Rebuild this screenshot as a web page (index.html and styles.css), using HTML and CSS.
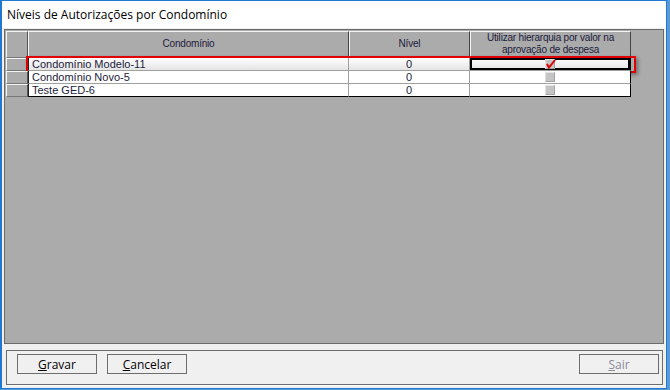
FILE: index.html
```html
<!DOCTYPE html>
<html lang="pt">
<head>
    <meta charset="UTF-8">
    <title>Níveis de Autorizações por Condomínio</title>
    <link rel="stylesheet" href="styles.css">
</head>
<body>
<div class="window">
    <div class="title">Níveis de Autorizações por Condomínio</div>
    <div class="content">
        <div class="grid">
            <div class="row head">
                <div class="sel"></div>
                <div class="hcell">Condomínio</div>
                <div class="hcell">Nível</div>
                <div class="hcell">Utilizar hierarquia por valor na<br>aprovação de despesa</div>
            </div>
            <div class="row data current">
                <div class="sel"></div>
                <div class="cell">Condomínio Modelo-11</div>
                <div class="cell num">0</div>
                <div class="cell chk focus">
                    <span class="box">
                        <svg width="11" height="10" viewBox="0 0 11 10"><path d="M2 5 L4 8.5 L10 1" fill="none" stroke="#e00000" stroke-width="2"/></svg>
                    </span>
                </div>
                <div class="mark"></div>
            </div>
            <div class="row data">
                <div class="sel"></div>
                <div class="cell">Condomínio Novo-5</div>
                <div class="cell num">0</div>
                <div class="cell chk"><span class="box"></span></div>
            </div>
            <div class="row data last">
                <div class="sel"></div>
                <div class="cell">Teste GED-6</div>
                <div class="cell num">0</div>
                <div class="cell chk"><span class="box"></span></div>
            </div>
        </div>
        <div class="buttons">
            <button class="btn"><u>G</u>ravar</button>
            <button class="btn"><u>C</u>ancelar</button>
            <button class="btn off push"><u>S</u>air</button>
        </div>
    </div>
</div>
</body>
</html>
```

FILE: styles.css
```css
body { margin: 0; background: #5b9bd5; font-family: "Liberation Sans", Arial, sans-serif; }
.window { box-sizing: border-box; width: 667px; height: 389px; border: 1px solid #1f78d1; border-left-width: 2px; background: #f0f0f0; display: flex; flex-direction: column; }
.title { height: 27px; line-height: 27px; background: #fff; padding-left: 5px; font-size: 12px; color: #000; font-family: "Open Sans", sans-serif; }
.content { flex: 1; display: flex; flex-direction: column; gap: 6px; padding: 1px 2px 3px 2px; }
.grid { box-sizing: border-box; height: 315px; border: 1px solid #6a6a6a; background: #ababab; padding: 1px; }
.row { display: grid; grid-template-columns: 22px 321px 121px 161px; position: relative; }
.head { height: 27px; }
.data { height: 13px; }
.sel { background: #ababab; border-top: 1px solid #f4f4f4; border-left: 1px solid #f4f4f4; border-right: 1px solid #555; border-bottom: 1px solid #777; box-sizing: border-box; }
.hcell { box-sizing: border-box; background: #ababab; border-top: 1px solid #f4f4f4; border-left: 1px solid #f4f4f4; border-right: 1px solid #444; border-bottom: 1px solid #555; display: flex; align-items: center; justify-content: center; text-align: center; font-size: 10px; letter-spacing: -0.2px; line-height: 12px; color: #1c1c3c; padding-bottom: 1px; }
.cell { box-sizing: border-box; background: #fff; border-right: 1px solid #a0a0a0; border-bottom: 1px solid #a0a0a0; font-size: 11px; line-height: 12px; color: #1c1c3c; padding-left: 3px; white-space: nowrap; overflow: hidden; }
.data .cell:nth-child(2) { border-left: 1px solid #222; }
.data .cell:nth-child(4) { border-right-color: #000; }
.last .cell { border-bottom-color: #000; }
.num { text-align: center; padding-left: 0; }
.chk { display: flex; justify-content: center; align-items: center; padding-left: 0; overflow: visible; }
.current .cell { background: linear-gradient(#fff, #e4e4e4); }
.focus { box-shadow: inset 0 0 0 2px #000; }
.box { box-sizing: border-box; width: 10px; height: 10px; background: #c4c4c4; border-top: 1px solid #e2e2e2; border-left: 1px solid #e2e2e2; border-right: 1px solid #a4a4a4; border-bottom: 1px solid #a4a4a4; position: relative; margin-left: -1px; }
.box svg { position: absolute; left: -1px; top: -1px; }
.mark { position: absolute; left: 20px; top: -2px; width: 610px; height: 17px; box-sizing: border-box; border: 2px solid #e00000; box-shadow: 2px 2px 4px rgba(0, 0, 0, 0.35); }
.buttons { box-sizing: border-box; height: 35px; margin: 0 1px 0 2px; border: 1px solid #6d6d6d; box-shadow: 0 1px 0 #fff; display: flex; gap: 10px; padding: 3px 3px 0 10px; }
.btn { box-sizing: border-box; width: 80px; height: 20px; border: 1px solid #6d6d6d; background: #f0f0f0; font-family: "Open Sans", sans-serif; font-size: 12px; color: #000; padding: 0; line-height: 17px; }
.off { color: #8b8b9b; }
.push { margin-left: auto; }
```
